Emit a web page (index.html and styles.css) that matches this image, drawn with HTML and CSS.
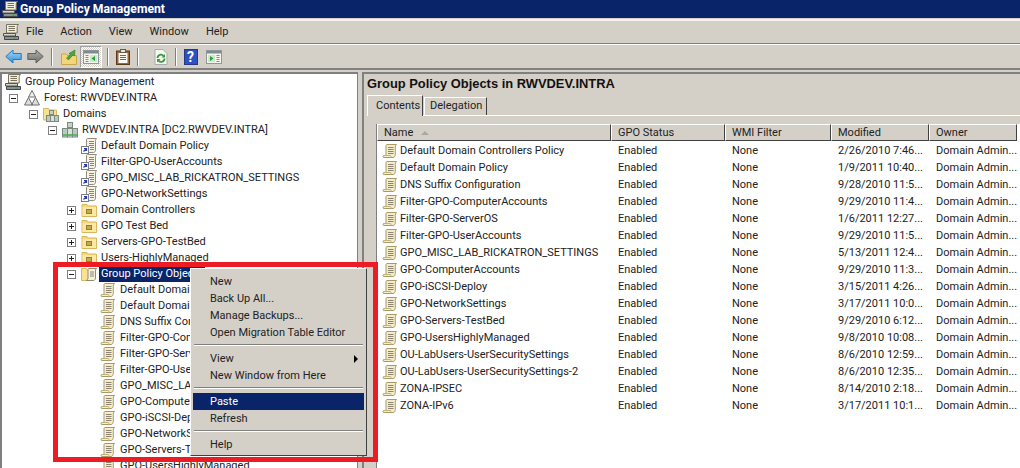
FILE: index.html
```html
<!DOCTYPE html>
<html lang="en">
<head>
<meta charset="utf-8">
<title>Group Policy Management</title>
<link rel="stylesheet" href="styles.css">
</head>
<body>
<svg class="defs" width="0" height="0">
  <defs>
    <symbol id="scroll" viewBox="0 0 16 16">
      <path d="M5 1.500h9.500c-.8.800-1.200 1.700-1.200 2.800v7.400c0 1.500-1 2.800-2.300 2.800H1.500c-.8-.8-.5-2 .5-2h2V3c0-.9.300-1.500 1-1.500z" fill="#f5edc9" stroke="#a89a68"/>
      <path d="M2 12.500h6.500c.5 0 .5 1 .5 2" fill="none" stroke="#c2b27c"/>
      <path d="M6 4.500h5.500M6 6.500h5.500M6 8.500h5.500M6 10.500h5.500" stroke="#8a8470"/>
    </symbol>
    <symbol id="gpolink" viewBox="0 0 16 16">
      <path d="M6.500.5h9c-.7.800-1 1.700-1 2.800v9c0 1.300-.8 2.200-2 2.200H5.500V2c0-.8.300-1.500 1-1.500z" fill="#f6f3e4" stroke="#908c7a"/>
      <path d="M8 3.500h5M8 5.500h5M8 7.500h5M9 9.500h4M9 11.500h4" stroke="#8a8470"/>
      <rect x=".5" y="8.500" width="7" height="7" fill="#fff" stroke="#7a7c90"/>
      <path d="M2.500 13.500l3-3M3 10.500h2.500v2.500" stroke="#2a3c9e" fill="none" stroke-width="1.200"/>
    </symbol>
    <symbol id="ou" viewBox="0 0 16 16">
      <path d="M1 14.500V2.500h5l1 1.500h8.500v10.500z" fill="#f6d778" stroke="#d8b85c"/>
      <path d="M1.500 5h13.500v9H1.500z" fill="#fce9a6"/>
      <rect x="5.500" y="7.500" width="5" height="4" fill="#c6aa4c" stroke="#94802f"/>
    </symbol>
    <symbol id="gpofolder" viewBox="0 0 16 16">
      <path d="M.5 14.500V2.500h5l1 1.500h6v10.500z" fill="#f9e193" stroke="#d8b85c"/>
      <path d="M8 2.500h7.500c-.7.700-1 1.500-1 2.500v7c0 1-.8 2.500-2 2.500H5c1 0 2-1.500 2-2.500V4c0-.8.400-1.500 1-1.500z" fill="#f6f1dc" stroke="#8e8a6c"/>
      <path d="M9 6h4M9 8h4M9 10h4" stroke="#8a8470"/>
    </symbol>
    <symbol id="console" viewBox="0 0 16 16">
      <path d="M3.500.5h12c-1 .8-1.300 1.800-1.300 3V9H3.500z" fill="#f3efdd" stroke="#77735e"/>
      <path d="M5.500 2.500h6.500M5.500 4.500h6.500M5.500 6.500h6.500" stroke="#77715c"/>
      <path d="M.5 9.500h12v2.500H.5z" fill="#d6d6cc" stroke="#55574f"/>
      <path d="M1.500 12.500h14v3h-14z" fill="#8d9193" stroke="#45484a"/>
      <path d="M10 14h3" stroke="#49a14a"/>
    </symbol>
    <symbol id="forest" viewBox="0 0 16 16">
      <path d="M8 .5l3.500 6.500h-7z" fill="#eeeeee" stroke="#6f6f6f"/>
      <path d="M4.500 7.500l4 7.500H.5zM11.500 7.500l4 7.500h-8z" fill="#dcdcdc" stroke="#6f6f6f"/>
    </symbol>
    <symbol id="domain" viewBox="0 0 16 16">
      <rect x="5.500" y=".5" width="5" height="5" fill="#c8d0c8" stroke="#7a8a80"/>
      <rect x=".5" y="6.500" width="5" height="8.500" fill="#bccabd" stroke="#7a8a80"/>
      <rect x="10.500" y="6.500" width="5" height="8.500" fill="#bccabd" stroke="#7a8a80"/>
      <rect x="5.500" y="6.500" width="5" height="8.500" fill="#dbe1da" stroke="#7a8a80"/>
      <path d="M1 13h4M11 13h4M6 13h4" stroke="#5cbb66" stroke-width="2"/>
    </symbol>
    <symbol id="domains" viewBox="0 0 16 16">
      <path d="M.5 14V2.500h5l1 1.500h7v10z" fill="#f9e193" stroke="#d8b85c"/>
      <rect x="6.500" y="4.500" width="4" height="4" fill="#c8d0c8" stroke="#7a8a80"/>
      <rect x="3.500" y="9.500" width="4" height="6" fill="#bccabd" stroke="#7a8a80"/>
      <rect x="7.500" y="9.500" width="4" height="6" fill="#dbe1da" stroke="#7a8a80"/>
      <rect x="11.500" y="9.500" width="4" height="6" fill="#bccabd" stroke="#7a8a80"/>
    </symbol>
    <linearGradient id="blueg" x1="0" y1="0" x2="0" y2="1">
      <stop offset="0" stop-color="#a3dcf8"/>
      <stop offset="1" stop-color="#2b8fdc"/>
    </linearGradient>
    <linearGradient id="greyg" x1="0" y1="0" x2="0" y2="1">
      <stop offset="0" stop-color="#b0b0ac"/>
      <stop offset="1" stop-color="#6e6e6a"/>
    </linearGradient>
    <symbol id="back" viewBox="0 0 17 15">
      <path d="M.8 7.500L8 1v3.500h8.200v6H8V14z" fill="url(#blueg)" stroke="#2a78b8"/>
    </symbol>
    <symbol id="forward" viewBox="0 0 17 15">
      <path d="M16.200 7.500L9 1v3.500H.8v6H9V14z" fill="url(#greyg)" stroke="#5f5f5c"/>
    </symbol>
    <symbol id="up" viewBox="0 0 16 16">
      <path d="M.5 15.500V5h5l1 1.500h9v9z" fill="#f3d67a" stroke="#c9a84a"/>
      <path d="M5.500 9l4-3.500L8 4.500 14 1l-.5 6-1.500-1-4.500 5z" fill="#4fa53a" stroke="#2f7a24" stroke-width=".6"/>
    </symbol>
    <symbol id="pane-l" viewBox="0 0 16 14">
      <rect x=".5" y=".5" width="15" height="13" fill="#f5f5ee" stroke="#8d979c"/>
      <rect x="1" y="1" width="14" height="2.500" fill="#7e8b95"/>
      <path d="M2.500 5.500h3M2.500 7.500h3M2.500 9.500h3M2.500 11.500h3" stroke="#7e8b95"/>
      <rect x="7" y="5" width="7" height="7" fill="#c9e8cc"/>
      <path d="M12 6v5L8.500 8.500z" fill="#2a9a3a"/>
    </symbol>
    <symbol id="pane-r" viewBox="0 0 16 14">
      <rect x=".5" y=".5" width="15" height="13" fill="#f5f5ee" stroke="#8d979c"/>
      <rect x="1" y="1" width="14" height="2.500" fill="#7e8b95"/>
      <path d="M10.500 5.500h3M10.500 7.500h3M10.500 9.500h3M10.500 11.500h3" stroke="#7e8b95"/>
      <rect x="2" y="5" width="7" height="7" fill="#c9e8cc"/>
      <path d="M4 6v5l3.500-2.500z" fill="#2a9a3a"/>
    </symbol>
    <symbol id="clip" viewBox="0 0 14 16">
      <rect x=".5" y="2" width="13" height="13.500" fill="#96683c" stroke="#5d3a18"/>
      <rect x="2.500" y="4" width="9" height="10" fill="#fafaf4"/>
      <path d="M4 6.500h6M4 8.500h6M4 10.500h6" stroke="#6a6a60"/>
      <rect x="4.500" y=".5" width="5" height="3" fill="#e6e6d8" stroke="#5d5d50"/>
    </symbol>
    <symbol id="refresh" viewBox="0 0 14 16">
      <path d="M1 .5h8l4 4v11H1z" fill="#f6f8f4" stroke="#a5adaf"/>
      <path d="M3.500 9a3.400 3.400 0 0 1 6-2.200M10.500 9.500A3.400 3.400 0 0 1 4.500 11.700" fill="none" stroke="#3b9a3a" stroke-width="1.800"/>
      <path d="M11 5v3.500H7.500zM3 13.500V10h3.500z" fill="#3b9a3a"/>
    </symbol>
    <symbol id="helpi" viewBox="0 0 14 16">
      <rect x=".5" y=".5" width="13" height="15" fill="#2d52c4" stroke="#26397f"/>
    </symbol>
  </defs>
</svg>

<div class="window">
  <div class="titlebar">
    <svg class="ico16"><use href="#console"/></svg>
    <span class="title-text">Group Policy Management</span>
  </div>
  <div class="menubar">
    <svg class="ico16"><use href="#console"/></svg>
    <span class="menu-item">File</span>
    <span class="menu-item">Action</span>
    <span class="menu-item">View</span>
    <span class="menu-item">Window</span>
    <span class="menu-item">Help</span>
  </div>
  <div class="toolbar">
    <svg class="tb-arrow"><use href="#back"/></svg>
    <svg class="tb-arrow fwd"><use href="#forward"/></svg>
    <i class="tb-sep"></i>
    <svg class="ico16 tb-up"><use href="#up"/></svg>
    <span class="tb-pressed"><svg class="tb-pane"><use href="#pane-l"/></svg></span>
    <i class="tb-sep s2"></i>
    <svg class="tb-icon"><use href="#clip"/></svg>
    <i class="tb-sep s3"></i>
    <svg class="tb-icon ml8"><use href="#refresh"/></svg>
    <i class="tb-sep s3"></i>
    <span class="tb-help"><svg class="tb-icon"><use href="#helpi"/></svg><b class="tb-q">?</b></span>
    <svg class="tb-pane ml8"><use href="#pane-r"/></svg>
  </div>

  <div class="panes">
    <div class="tree">
      <div class="node l0"><svg class="ico16"><use href="#console"/></svg><span>Group Policy Management</span></div>
      <div class="node b0"><i class="box minus"></i><svg class="ico16"><use href="#forest"/></svg><span>Forest: RWVDEV.INTRA</span></div>
      <div class="node b1"><i class="box minus"></i><svg class="ico16"><use href="#domains"/></svg><span>Domains</span></div>
      <div class="node b2"><i class="box minus"></i><svg class="ico16"><use href="#domain"/></svg><span>RWVDEV.INTRA [DC2.RWVDEV.INTRA]</span></div>
      <div class="node b3"><i class="nobox"></i><svg class="ico16"><use href="#gpolink"/></svg><span>Default Domain Policy</span></div>
      <div class="node b3"><i class="nobox"></i><svg class="ico16"><use href="#gpolink"/></svg><span>Filter-GPO-UserAccounts</span></div>
      <div class="node b3"><i class="nobox"></i><svg class="ico16"><use href="#gpolink"/></svg><span>GPO_MISC_LAB_RICKATRON_SETTINGS</span></div>
      <div class="node b3"><i class="nobox"></i><svg class="ico16"><use href="#gpolink"/></svg><span>GPO-NetworkSettings</span></div>
      <div class="node b3"><i class="box plus"></i><svg class="ico16"><use href="#ou"/></svg><span>Domain Controllers</span></div>
      <div class="node b3"><i class="box plus"></i><svg class="ico16"><use href="#ou"/></svg><span>GPO Test Bed</span></div>
      <div class="node b3"><i class="box plus"></i><svg class="ico16"><use href="#ou"/></svg><span>Servers-GPO-TestBed</span></div>
      <div class="node b3"><i class="box plus"></i><svg class="ico16"><use href="#ou"/></svg><span>Users-HighlyManaged</span></div>
      <div class="node b3"><i class="box minus"></i><svg class="ico16"><use href="#gpofolder"/></svg><span class="selected">Group Policy Objects</span></div>
      <div class="node l4"><svg class="ico16"><use href="#scroll"/></svg><span>Default Domain Controllers Policy</span></div>
      <div class="node l4"><svg class="ico16"><use href="#scroll"/></svg><span>Default Domain Policy</span></div>
      <div class="node l4"><svg class="ico16"><use href="#scroll"/></svg><span>DNS Suffix Configuration</span></div>
      <div class="node l4"><svg class="ico16"><use href="#scroll"/></svg><span>Filter-GPO-ComputerAccounts</span></div>
      <div class="node l4"><svg class="ico16"><use href="#scroll"/></svg><span>Filter-GPO-ServerOS</span></div>
      <div class="node l4"><svg class="ico16"><use href="#scroll"/></svg><span>Filter-GPO-UserAccounts</span></div>
      <div class="node l4"><svg class="ico16"><use href="#scroll"/></svg><span>GPO_MISC_LAB_RICKATRON_SETTINGS</span></div>
      <div class="node l4"><svg class="ico16"><use href="#scroll"/></svg><span>GPO-ComputerAccounts</span></div>
      <div class="node l4"><svg class="ico16"><use href="#scroll"/></svg><span>GPO-iSCSI-Deploy</span></div>
      <div class="node l4"><svg class="ico16"><use href="#scroll"/></svg><span>GPO-NetworkSettings</span></div>
      <div class="node l4"><svg class="ico16"><use href="#scroll"/></svg><span>GPO-Servers-TestBed</span></div>
      <div class="node l4"><svg class="ico16"><use href="#scroll"/></svg><span>GPO-UsersHighlyManaged</span></div>
    </div>
    <div class="detail">
      <h1 class="detail-title">Group Policy Objects in RWVDEV.INTRA</h1>
      <div class="tabs">
        <span class="tab active">Contents</span>
        <span class="tab">Delegation</span>
      </div>
      <div class="tabbody">
        <div class="list">
          <div class="row head">
            <span class="c1">Name <i class="sort"></i></span><span class="c2">GPO Status</span><span class="c3">WMI Filter</span><span class="c4">Modified</span><span class="c5">Owner</span>
          </div>
          <div class="row"><span class="c1"><svg class="ico16"><use href="#scroll"/></svg>Default Domain Controllers Policy</span><span class="c2">Enabled</span><span class="c3">None</span><span class="c4">2/26/2010 7:46...</span><span class="c5">Domain Admin...</span></div>
          <div class="row"><span class="c1"><svg class="ico16"><use href="#scroll"/></svg>Default Domain Policy</span><span class="c2">Enabled</span><span class="c3">None</span><span class="c4">1/9/2011 10:40...</span><span class="c5">Domain Admin...</span></div>
          <div class="row"><span class="c1"><svg class="ico16"><use href="#scroll"/></svg>DNS Suffix Configuration</span><span class="c2">Enabled</span><span class="c3">None</span><span class="c4">9/28/2010 11:5...</span><span class="c5">Domain Admin...</span></div>
          <div class="row"><span class="c1"><svg class="ico16"><use href="#scroll"/></svg>Filter-GPO-ComputerAccounts</span><span class="c2">Enabled</span><span class="c3">None</span><span class="c4">9/29/2010 11:4...</span><span class="c5">Domain Admin...</span></div>
          <div class="row"><span class="c1"><svg class="ico16"><use href="#scroll"/></svg>Filter-GPO-ServerOS</span><span class="c2">Enabled</span><span class="c3">None</span><span class="c4">1/6/2011 12:27...</span><span class="c5">Domain Admin...</span></div>
          <div class="row"><span class="c1"><svg class="ico16"><use href="#scroll"/></svg>Filter-GPO-UserAccounts</span><span class="c2">Enabled</span><span class="c3">None</span><span class="c4">9/29/2010 11:5...</span><span class="c5">Domain Admin...</span></div>
          <div class="row"><span class="c1"><svg class="ico16"><use href="#scroll"/></svg>GPO_MISC_LAB_RICKATRON_SETTINGS</span><span class="c2">Enabled</span><span class="c3">None</span><span class="c4">5/13/2011 12:4...</span><span class="c5">Domain Admin...</span></div>
          <div class="row"><span class="c1"><svg class="ico16"><use href="#scroll"/></svg>GPO-ComputerAccounts</span><span class="c2">Enabled</span><span class="c3">None</span><span class="c4">9/29/2010 11:3...</span><span class="c5">Domain Admin...</span></div>
          <div class="row"><span class="c1"><svg class="ico16"><use href="#scroll"/></svg>GPO-iSCSI-Deploy</span><span class="c2">Enabled</span><span class="c3">None</span><span class="c4">3/15/2011 4:26...</span><span class="c5">Domain Admin...</span></div>
          <div class="row"><span class="c1"><svg class="ico16"><use href="#scroll"/></svg>GPO-NetworkSettings</span><span class="c2">Enabled</span><span class="c3">None</span><span class="c4">3/17/2011 10:0...</span><span class="c5">Domain Admin...</span></div>
          <div class="row"><span class="c1"><svg class="ico16"><use href="#scroll"/></svg>GPO-Servers-TestBed</span><span class="c2">Enabled</span><span class="c3">None</span><span class="c4">9/29/2010 6:12...</span><span class="c5">Domain Admin...</span></div>
          <div class="row"><span class="c1"><svg class="ico16"><use href="#scroll"/></svg>GPO-UsersHighlyManaged</span><span class="c2">Enabled</span><span class="c3">None</span><span class="c4">9/8/2010 10:08...</span><span class="c5">Domain Admin...</span></div>
          <div class="row"><span class="c1"><svg class="ico16"><use href="#scroll"/></svg>OU-LabUsers-UserSecuritySettings</span><span class="c2">Enabled</span><span class="c3">None</span><span class="c4">8/6/2010 12:59...</span><span class="c5">Domain Admin...</span></div>
          <div class="row"><span class="c1"><svg class="ico16"><use href="#scroll"/></svg>OU-LabUsers-UserSecuritySettings-2</span><span class="c2">Enabled</span><span class="c3">None</span><span class="c4">8/6/2010 12:35...</span><span class="c5">Domain Admin...</span></div>
          <div class="row"><span class="c1"><svg class="ico16"><use href="#scroll"/></svg>ZONA-IPSEC</span><span class="c2">Enabled</span><span class="c3">None</span><span class="c4">8/14/2010 2:18...</span><span class="c5">Domain Admin...</span></div>
          <div class="row"><span class="c1"><svg class="ico16"><use href="#scroll"/></svg>ZONA-IPv6</span><span class="c2">Enabled</span><span class="c3">None</span><span class="c4">3/17/2011 10:1...</span><span class="c5">Domain Admin...</span></div>
        </div>
      </div>
    </div>
  </div>

  <div class="context">
    <div class="ci">New</div>
    <div class="ci">Back Up All...</div>
    <div class="ci">Manage Backups...</div>
    <div class="ci">Open Migration Table Editor</div>
    <hr class="cs">
    <div class="ci arrow">View</div>
    <div class="ci">New Window from Here</div>
    <hr class="cs">
    <div class="ci hot">Paste</div>
    <div class="ci">Refresh</div>
    <hr class="cs">
    <div class="ci">Help</div>
  </div>
  <div class="redbox"></div>
</div>
</body>
</html>
```
FILE: styles.css
```css
* { box-sizing: border-box; }
html, body { margin: 0; height: 468px; overflow: hidden; }
body { font: 11px/16px Roboto, "Liberation Sans", Arial, sans-serif; color: #222; background: #d4d0c8; }
.defs { position: absolute; }
.window { position: relative; width: 1020px; height: 468px; display: flex; flex-direction: column; overflow: hidden; }
.ico16 { width: 16px; height: 16px; flex: none; display: block; }

.titlebar { height: 18px; background: #0a246a; color: #fff; display: flex; align-items: center; padding-left: 2px; gap: 2px; font-weight: bold; font-size: 12.200px; }
.menubar { height: 25px; margin-top: 1px; display: flex; align-items: center; padding-left: 3px; border-top: 2px solid #f4f2ee; border-bottom: 1px solid #808080; }
.menu-item { margin-left: 17px; }
.menubar .ico16 + .menu-item { margin-left: 7px; }
.toolbar { height: 26px; display: flex; align-items: center; padding-left: 5px; border-top: 1px solid #fff; border-bottom: 2px solid #808080; }
.tb-arrow { width: 17px; height: 15px; display: block; flex: none; }
.fwd { margin-left: 5px; }
.tb-pane { width: 16px; height: 14px; display: block; flex: none; }
.tb-icon { width: 14px; height: 16px; display: block; flex: none; }
.ml8 { margin-left: 8px; }
.tb-sep { width: 2px; height: 18px; flex: none; background: #808080; border-right: 1px solid #fff; margin: 0 7px 0 7px; }
.s2 { margin: 0 7px 0 5px; }
.s3 { margin: 0 7px 0 7px; }
.tb-up { margin-left: 1px; }
.tb-pressed { width: 22px; height: 22px; margin-left: 3px; flex: none; border: 1px solid #a0a0a0; border-right-color: #fff; border-bottom-color: #fff; background: repeating-conic-gradient(#fff 0 25%, #d4d0c8 0 50%) 0 0 / 2px 2px; display: flex; align-items: center; justify-content: center; }
.tb-help { position: relative; display: block; flex: none; }
.tb-q { position: absolute; left: 3px; top: 0; color: #fff; font-size: 14px; }

.panes { flex: 1; min-height: 0; display: flex; gap: 4px; padding-top: 2px; }
.tree { width: 358px; flex: none; background: #fff; border-left: 2px solid #808080; border-top: 2px solid #808080; border-right: 1px solid #808080; overflow: hidden; }
.node { height: 16px; display: flex; align-items: center; white-space: nowrap; }
.node svg { margin-right: 4px; }
.l0 { padding-left: 3px; }
.b0 { padding-left: 7px; }
.b0 .box { margin-right: 6px; }
.b1 { padding-left: 27px; }
.b2 { padding-left: 46px; }
.b3 { padding-left: 65px; }
.l4 { padding-left: 98px; }
.box, .nobox { width: 9px; height: 9px; flex: none; margin-right: 5px; position: relative; display: block; }
.box { border: 1px solid #808080; background: #fff; }
.box::before { content: ""; position: absolute; left: 1px; top: 3px; width: 5px; height: 1px; background: #222; }
.plus::after { content: ""; position: absolute; left: 3px; top: 1px; width: 1px; height: 5px; background: #222; }
.selected { background: #0a246a; color: #fff; padding: 0 2px; margin-left: -2px; }

.detail { flex: 1; min-width: 0; border-left: 2px solid #808080; border-top: 2px solid #808080; padding-left: 3px; display: flex; flex-direction: column; }
.detail-title { margin: 0; font-size: 12.900px; line-height: 18px; padding-top: 1px; font-weight: bold; color: #111; height: 22px; font-family: "Liberation Sans", Arial, sans-serif; }
.tabs { display: flex; height: 20px; align-items: flex-end; border-bottom: 1px solid #fff; }
.tab { height: 18px; padding: 0 4px 0 5px; margin-left: 1px; border: 1px solid #fff; border-right-color: #404040; border-bottom: 0; }
.tab.active { height: 21px; width: 56px; margin-left: 0; padding: 2px 0 0 8px; margin-bottom: -1px; background: #d4d0c8; position: relative; }
.tabbody { flex: 1; min-height: 0; padding: 8px 0 0 9px; }
.list { height: 100%; background: #fff; border-left: 1px solid #808080; overflow: hidden; }
.row { height: 17px; display: flex; align-items: center; white-space: nowrap; }
.row > span { display: flex; align-items: center; padding-left: 7px; height: 17px; flex: none; }
.row > .c1 { padding-left: 6px; }
.head > span { padding-left: 6px; }
.row .c1 svg { margin-right: 2px; margin-left: -1px; }
.c1 { width: 234px; }
.c2 { width: 114px; }
.c3 { width: 106px; }
.c4 { width: 98px; }
.c5 { width: 88px; }
.row.head > span { padding-left: 6px; }
.head { background: #d4d0c8; width: 640px; height: 17px; margin-bottom: 1px; }
.head > span { border: 1px solid #fff; border-right-color: #404040; border-bottom-color: #404040; }
.sort { width: 0; height: 0; margin-left: 8px; border: 4px solid transparent; border-top: 0; border-bottom: 4px solid #a8a8a0; display: block; }

.context { position: absolute; left: 190px; top: 268px; width: 177px; height: 188px; background: #d4d0c8; border: 1px solid #fff; border-right-color: #404040; border-bottom-color: #404040; padding: 4px 2px; }
.ci { height: 17px; line-height: 17px; padding-left: 17px; position: relative; }
.ci.hot { background: #0a246a; color: #fff; }
.ci.arrow::after { content: ""; position: absolute; right: 6px; top: 5px; border: 4px solid transparent; border-right: 0; border-left: 4px solid #000; }
.cs { margin: 3px 1px 4px; border: 0; border-top: 1px solid #808080; border-bottom: 1px solid #fff; height: 2px; }
.redbox { position: absolute; left: 53px; top: 262px; width: 325px; height: 200px; border: 5px solid #ed1c24; }
```
